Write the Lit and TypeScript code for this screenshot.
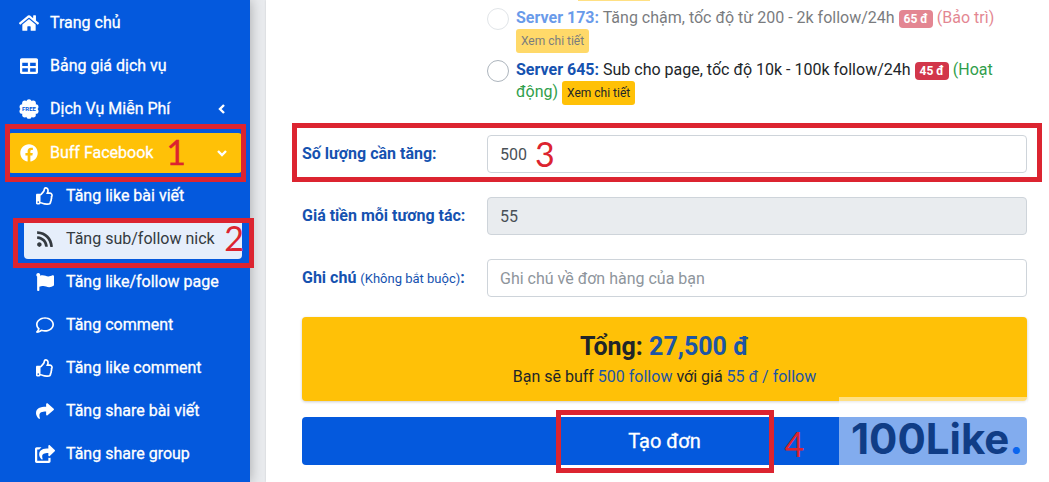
import { LitElement, html, css, svg, nothing } from "lit";
import { customElement, property } from "lit/decorators.js";

type Glyph = { box: string; width: number; d: string };

const GLYPHS: Record<string, Glyph> = {
  home: {
    box: "0 0 576 512",
    width: 20,
    d: "M280.37 148.26L96 300.11V464a16 16 0 0 0 16 16l112.06-.29a16 16 0 0 0 15.92-16V368a16 16 0 0 1 16-16h64a16 16 0 0 1 16 16v95.64a16 16 0 0 0 16 16.05L464 480a16 16 0 0 0 16-16V300L295.67 148.26a12.19 12.19 0 0 0-15.3 0zM571.6 251.47L488 182.56V44.05a12 12 0 0 0-12-12h-56a12 12 0 0 0-12 12v72.61L318.47 43a48 48 0 0 0-61 0L4.34 251.47a12 12 0 0 0-1.6 16.9l25.5 31A12 12 0 0 0 45.15 301l235.22-193.74a12.19 12.19 0 0 1 15.3 0L530.9 301a12 12 0 0 0 16.9-1.6l25.5-31a12 12 0 0 0-1.7-16.93z",
  },
  table: {
    box: "0 0 512 512",
    width: 18,
    d: "M464 32H48C21.49 32 0 53.49 0 80v352c0 26.51 21.49 48 48 48h416c26.51 0 48-21.49 48-48V80c0-26.51-21.49-48-48-48zM224 416H64v-96h160v96zm0-160H64v-96h160v96zm224 160H288v-96h160v96zm0-160H288v-96h160v96z",
  },
  facebook: {
    box: "0 0 512 512",
    width: 18,
    d: "M504 256C504 119 393 8 256 8S8 119 8 256c0 123.78 90.69 226.38 209.25 245V327.69h-63V256h63v-54.64c0-62.15 37-96.48 93.67-96.48 27.14 0 55.52 4.84 55.52 4.84v61h-31.28c-30.8 0-40.41 19.12-40.41 38.73V256h68.78l-11 71.69h-57.78V501C413.31 482.38 504 379.78 504 256z",
  },
  like: {
    box: "0 0 512 512",
    width: 18,
    d: "M466.27 286.69C475.04 271.84 480 256 480 236.85c0-44.015-37.218-85.58-85.82-85.58H357.7c4.92-12.81 8.85-28.13 8.85-46.54C366.55 31.936 328.86 0 271.28 0c-61.607 0-58.093 94.933-71.76 108.6-22.747 22.747-49.615 66.447-68.76 83.4H32c-17.673 0-32 14.327-32 32v240c0 17.673 14.327 32 32 32h64c14.893 0 27.408-10.174 30.978-23.95 44.509 1.001 75.06 39.94 177.802 39.94 7.22 0 15.22.01 22.22.01 77.117 0 111.986-39.423 112.94-95.33 13.319-18.425 20.299-43.122 17.34-66.99 9.854-18.452 13.664-40.343 8.99-62.99zm-61.75 53.83c12.56 21.13 1.26 49.41-13.94 57.57 7.7 48.78-17.608 65.9-53.12 65.9h-37.82c-71.639 0-118.029-37.82-171.64-37.82V240h10.92c28.36 0 67.98-70.89 94.54-97.46 28.36-28.36 18.91-75.63 37.82-94.54 47.27 0 47.27 32.98 47.27 56.73 0 39.17-28.36 56.72-28.36 94.54h103.99c21.11 0 37.73 18.91 37.82 37.82.09 18.9-12.82 37.81-22.27 37.81 13.489 14.555 16.371 45.236-5.21 65.62zM88 432c0 13.255-10.745 24-24 24s-24-10.745-24-24 10.745-24 24-24 24 10.745 24 24z",
  },
  rss: {
    box: "0 0 448 512",
    width: 16,
    d: "M128.081 415.959c0 35.369-28.672 64.041-64.041 64.041S0 451.328 0 415.959s28.672-64.041 64.041-64.041 64.04 28.673 64.04 64.041zm175.66 47.25c-8.354-154.6-132.185-278.587-286.95-286.95C7.656 175.765 0 183.105 0 192.253v48.069c0 8.415 6.49 15.472 14.887 16.018 111.832 7.284 201.473 96.702 208.772 208.772.547 8.397 7.604 14.887 16.018 14.887h48.069c9.149.001 16.489-7.655 15.995-16.79zm144.249.288C439.596 229.677 251.465 40.445 16.503 32.01 7.473 31.686 0 38.981 0 48.016v48.068c0 8.625 6.835 15.645 15.453 15.999 191.179 7.839 344.627 161.316 352.465 352.465.353 8.618 7.373 15.453 15.999 15.453h48.068c9.034-.001 16.329-7.474 16.005-16.504z",
  },
  flag: {
    box: "0 0 512 512",
    width: 18,
    d: "M349.565 98.783C295.978 98.783 251.721 64 184.348 64c-24.955 0-47.309 4.384-68.045 12.013a55.947 55.947 0 0 0 3.586-23.562C118.117 24.015 94.806 1.206 66.338.048 34.345-1.254 8 24.296 8 56c0 19.026 9.497 35.825 24 45.945V488c0 13.255 10.745 24 24 24h16c13.255 0 24-10.745 24-24v-94.4c28.311-12.064 63.582-22.122 114.435-22.122 53.588 0 97.844 34.783 165.217 34.783 48.169 0 86.667-16.294 122.505-40.858C506.84 359.452 512 349.571 512 339.045v-243.1c0-23.393-24.269-38.87-45.485-29.016-34.338 15.948-76.454 31.854-116.95 31.854z",
  },
  comment: {
    box: "0 0 512 512",
    width: 18,
    d: "M256 32C114.6 32 0 125.1 0 240c0 47.6 19.9 91.2 52.9 126.3C38 405.7 7 439.1 6.5 439.5c-6.6 7-8.4 17.2-4.6 26S14.4 480 24 480c61.5 0 110-25.7 139.1-46.3C192 442.8 223.2 448 256 448c141.4 0 256-93.1 256-208S397.4 32 256 32zm0 368c-26.7 0-53.1-4.1-78.4-12.1l-22.7-7.2-19.5 13.8c-14.3 10.1-33.9 21.4-57.5 29 7.3-12.1 14.4-25.7 19.9-40.2l10.6-28.1-20.6-21.8C69.7 314.1 48 282.2 48 240c0-88.2 93.3-160 208-160s208 71.8 208 160-93.3 160-208 160z",
  },
  share: {
    box: "0 0 512 512",
    width: 18,
    d: "M503.691 189.836L327.687 37.851C312.281 24.546 288 35.347 288 56.015v80.053C127.371 137.907 0 170.1 0 322.326c0 61.441 39.581 122.309 83.333 154.132 13.653 9.931 33.111-2.533 28.077-18.631C66.066 312.814 132.917 274.316 288 272.085V360c0 20.7 24.3 31.453 39.687 18.164l176.004-152c11.071-9.562 11.086-26.753 0-36.328z",
  },
  shareSquare: {
    box: "0 0 576 512",
    width: 20,
    d: "M568.482 177.448L424.479 313.433C409.3 327.768 384 317.14 384 295.985v-71.963c-144.575.97-205.566 35.113-164.775 171.353 4.483 14.973-12.846 26.567-25.006 17.33C155.252 383.105 120 326.488 120 269.339c0-143.937 117.599-172.5 264-173.312V24.012c0-21.174 25.317-31.768 40.479-17.448l144.003 135.988c10.02 9.463 10.028 25.425 0 34.896zM384 379.128V448H64V128h50.916a11.99 11.99 0 0 0 8.648-3.693c14.953-15.568 32.237-27.89 51.014-37.676C185.708 80.83 181.584 64 169.033 64H48C21.49 64 0 85.49 0 112v352c0 26.51 21.49 48 48 48h352c26.51 0 48-21.49 48-48v-88.806c0-8.288-8.197-14.066-16.011-11.302a71.83 71.83 0 0 1-34.189 3.377c-7.27-1.046-13.8 4.514-13.8 11.859z",
  },
};

@customElement("nav-icon")
class NavIcon extends LitElement {
  @property() name = "";

  static styles = css`
    :host {
      display: flex;
      justify-content: center;
      align-items: center;
      flex: none;
      width: 26px;
    }
    svg {
      display: block;
      fill: currentColor;
    }
    .free {
      font: 700 6px "Roboto", sans-serif;
      fill: #0459dd;
      -webkit-text-stroke: 0;
    }
  `;

  render() {
    if (this.name === "free") {
      const bumps = Array.from({ length: 10 }, (_, i) => {
        const a = (i * Math.PI) / 5;
        return svg`<circle cx=${10 + 7.2 * Math.sin(a)} cy=${10 - 7.2 * Math.cos(a)} r="2.6"></circle>`;
      });
      return html`<svg width="20" height="20" viewBox="0 0 20 20" aria-hidden="true">
        <circle cx="10" cy="10" r="8"></circle>
        ${bumps}
        <text class="free" x="10" y="12" text-anchor="middle">FREE</text>
      </svg>`;
    }
    const g = GLYPHS[this.name];
    if (!g) return nothing;
    return html`<svg width=${g.width} height="18" viewBox=${g.box} aria-hidden="true">
      <path d=${g.d}></path>
    </svg>`;
  }
}

type NavItem = { icon: string; label: string; current?: boolean };

const TOP: NavItem[] = [
  { icon: "home", label: "Trang chủ" },
  { icon: "table", label: "Bảng giá dịch vụ" },
];

const SUB: NavItem[] = [
  { icon: "like", label: "Tăng like bài viết" },
  { icon: "rss", label: "Tăng sub/follow nick", current: true },
  { icon: "flag", label: "Tăng like/follow page" },
  { icon: "comment", label: "Tăng comment" },
  { icon: "like", label: "Tăng like comment" },
  { icon: "share", label: "Tăng share bài viết" },
  { icon: "shareSquare", label: "Tăng share group" },
];

@customElement("side-nav")
class SideNav extends LitElement {
  static styles = css`
    :host {
      display: block;
      box-sizing: border-box;
      padding: 3px 8px 0;
      background: #0459dd;
      color: #fff;
      box-shadow: 0 0 12px rgba(0, 0, 0, 0.3);
      position: relative;
      z-index: 1;
    }
    ul {
      list-style: none;
      margin: 0;
      padding: 0;
      display: flex;
      flex-direction: column;
      gap: 3px;
    }
    .sub {
      padding: 3px 0 0 16px;
    }
    .open {
      padding-top: 1px;
    }
    li {
      position: relative;
    }
    .link {
      position: relative;
      box-sizing: border-box;
      display: flex;
      align-items: center;
      gap: 8px;
      width: 100%;
      height: 40px;
      padding: 0 15px 0 8px;
      border: 0;
      border-radius: 4px;
      background: none;
      color: inherit;
      font: 400 16px/24px "Roboto", sans-serif;
      text-align: left;
      text-decoration: none;
      white-space: nowrap;
      -webkit-text-stroke: 0.3px currentColor;
    }
    .label {
      flex: 1;
    }
    .active {
      background: #ffc107;
    }
    .current {
      background: #e6eefb;
      color: #343a40;
      -webkit-text-stroke: 0;
    }
    .chevron {
      fill: none;
      stroke: currentColor;
      stroke-width: 2.4;
    }
    .frame {
      position: absolute;
      box-sizing: border-box;
      border: 5px solid #dc2430;
      pointer-events: none;
      z-index: 1;
    }
    .frame-one {
      inset: -9px -4px -9px -3px;
    }
    .frame-two {
      inset: -1px -12px -9px -11px;
    }
    .step {
      position: absolute;
      top: 50%;
      margin-top: -21px;
      color: #dc2430;
      font: 400 34px/40px "Lato", sans-serif;
      z-index: 2;
      pointer-events: none;
    }
    .step-one {
      right: 56px;
    }
    .step-two {
      right: -2px;
    }
  `;

  link(item: NavItem) {
    return html`<li>
      <a
        class="link ${item.current ? "current" : ""}"
        href="#"
        aria-current=${item.current ? "page" : nothing}
      >
        <nav-icon name=${item.icon}></nav-icon>
        <span class="label">${item.label}</span>
      </a>
      ${item.current
        ? html`<span class="frame frame-two"></span><span class="step step-two">2</span>`
        : nothing}
    </li>`;
  }

  render() {
    return html`<nav>
      <ul>
        ${TOP.map((i) => this.link(i))}
        <li>
          <button class="link" type="button" aria-expanded="false">
            <nav-icon name="free"></nav-icon>
            <span class="label">Dịch Vụ Miễn Phí</span>
            <svg class="chevron" width="10" height="10" viewBox="0 0 10 10" aria-hidden="true">
              <path d="M7 1L3 5l4 4"></path>
            </svg>
          </button>
        </li>
        <li class="open">
          <button class="link active" type="button" aria-expanded="true">
            <nav-icon name="facebook"></nav-icon>
            <span class="label">Buff Facebook</span>
            <svg class="chevron" width="10" height="10" viewBox="0 0 10 10" aria-hidden="true">
              <path d="M1 3l4 4 4-4"></path>
            </svg>
            <span class="frame frame-one"></span>
            <span class="step step-one">1</span>
          </button>
          <ul class="sub">
            ${SUB.map((i) => this.link(i))}
          </ul>
        </li>
      </ul>
    </nav>`;
  }
}

type Server = {
  id: number;
  text: string;
  price: string;
  status: string;
  down?: boolean;
};

const SERVERS: Server[] = [
  { id: 173, text: "Tăng chậm, tốc độ từ 200 - 2k follow/24h", price: "65 đ", status: "(Bảo trì)", down: true },
  { id: 645, text: "Sub cho page, tốc độ 10k - 100k follow/24h", price: "45 đ", status: "(Hoạt động)" },
];

@customElement("order-form")
class OrderForm extends LitElement {
  static styles = css`
    :host {
      display: block;
      box-sizing: border-box;
      padding: 0 22px 17px 36px;
      background: #fff;
      color: #212529;
      font: 400 16px/24px "Roboto", sans-serif;
    }
    form {
      display: flex;
      flex-direction: column;
      gap: 24px;
    }
    .row {
      position: relative;
      display: grid;
      grid-template-columns: 185px 1fr;
      align-items: center;
    }
    .servers {
      grid-column: 2;
      display: flex;
      flex-direction: column;
      gap: 6px;
      margin-bottom: 6px;
    }
    .cut {
      width: 72px;
      height: 1px;
      margin-left: 91px;
      background: #ffe083;
    }
    .server {
      display: grid;
      grid-template-columns: 21px 1fr;
      column-gap: 8px;
      align-items: start;
      line-height: 22px;
    }
    .down {
      opacity: 0.6;
    }
    .radio {
      appearance: none;
      box-sizing: border-box;
      width: 22px;
      height: 22px;
      margin: 1px 0 0;
      border: 1px solid #adb5bd;
      border-radius: 50%;
      background: #fff;
    }
    .radio:disabled {
      border-color: #ced4da;
    }
    .name,
    .label {
      color: #1552b0;
      font-weight: 700;
    }
    .down .name {
      color: #0459dd;
    }
    .badge {
      display: inline-block;
      padding: 0 5px;
      border-radius: 4px;
      background: #d2364a;
      color: #fff;
      font: 700 12px/18px "Roboto", sans-serif;
    }
    .ok {
      color: #2f9e4b;
    }
    .bad {
      color: #d2364a;
    }
    .more {
      height: 24px;
      padding: 0 5px;
      border: 0;
      border-radius: 3px;
      background: #ffc107;
      color: #212529;
      font: 400 12px/24px "Roboto", sans-serif;
      vertical-align: middle;
    }
    .hint {
      font-size: 13px;
      font-weight: 400;
    }
    .input {
      box-sizing: border-box;
      width: 100%;
      height: 38px;
      padding: 6px 12px;
      border: 1px solid #ced4da;
      border-radius: 4px;
      background: #fff;
      color: #495057;
      font: 400 16px/24px "Roboto", sans-serif;
    }
    .input:read-only {
      background: #e9ecef;
    }
    .input::placeholder {
      color: #8e959c;
      opacity: 1;
    }
    .total {
      padding: 12px;
      margin-top: -4px;
      border-radius: 4px;
      background: #ffc107;
      box-shadow: 0 1px 3px rgba(0, 0, 0, 0.2);
      text-align: center;
    }
    .sum {
      margin: 0;
      font-size: 25px;
      line-height: 36px;
      font-weight: 700;
    }
    .detail {
      margin: 0;
    }
    .blue {
      color: #1d55a5;
    }
    .action {
      position: relative;
      margin-top: -8px;
    }
    .submit {
      width: 100%;
      height: 48px;
      border: 0;
      border-radius: 4px;
      background: #0459dd;
      color: #fff;
      font: 400 20px/30px "Roboto", sans-serif;
      -webkit-text-stroke: 0.3px currentColor;
    }
    .frame {
      position: absolute;
      box-sizing: border-box;
      border: 5px solid #dc2430;
      pointer-events: none;
    }
    .frame-row {
      inset: -12px -15px -9px -10px;
    }
    .frame-submit {
      inset: -7px 0 -8px;
      width: 218px;
      margin: 0 auto;
    }
    .step {
      position: absolute;
      top: 50%;
      margin-top: -20px;
      color: #dc2430;
      font: 400 34px/40px "Lato", sans-serif;
      pointer-events: none;
    }
    .step-row {
      left: 233px;
    }
    .step-submit {
      left: 50%;
      margin: -17px 0 0 120px;
    }
    .mark {
      position: absolute;
      inset: -20px 0 -17px auto;
      box-sizing: border-box;
      width: 188px;
      padding-left: 12px;
      background: rgba(255, 255, 255, 0.5);
      color: #103d86;
      font: 700 42px/84px "Inter", sans-serif;
      white-space: nowrap;
      pointer-events: none;
    }
    .dot {
      color: #0a66ee;
    }
  `;

  server(s: Server) {
    return html`<div class="server ${s.down ? "down" : ""}">
      <input class="radio" type="radio" name="server" id="server-${s.id}" ?disabled=${s.down} />
      <div>
        <label for="server-${s.id}"
          ><span class="name">Server ${s.id}:</span> ${s.text}
          <span class="badge">${s.price}</span>
          ${s.status
            .split(" ")
            .map((word) => html`<span class=${s.down ? "bad" : "ok"}>${word}</span> `)}</label
        ><button class="more" type="button">Xem chi tiết</button>
      </div>
    </div>`;
  }

  render() {
    return html`<form>
      <div class="row">
        <div class="servers">
          <div class="cut"></div>
          ${SERVERS.map((s) => this.server(s))}
        </div>
      </div>
      <div class="row">
        <label class="label" for="amount">Số lượng cần tăng:</label>
        <input class="input" id="amount" type="text" inputmode="numeric" value="500" />
        <span class="frame frame-row"></span>
        <span class="step step-row">3</span>
      </div>
      <div class="row">
        <label class="label" for="price">Giá tiền mỗi tương tác:</label>
        <input class="input" id="price" type="text" value="55" readonly />
      </div>
      <div class="row">
        <label class="label" for="note">Ghi chú <span class="hint">(Không bắt buộc)</span>:</label>
        <input class="input" id="note" type="text" placeholder="Ghi chú về đơn hàng của bạn" />
      </div>
      <div class="total">
        <h2 class="sum">Tổng: <span class="blue">27,500 đ</span></h2>
        <p class="detail">
          Bạn sẽ buff <span class="blue">500 follow</span> với giá
          <span class="blue">55 đ / follow</span>
        </p>
      </div>
      <div class="action">
        <button class="submit" type="button">Tạo đơn</button>
        <span class="frame frame-submit"></span>
        <span class="step step-submit">4</span>
        <div class="mark">100Like<span class="dot">.</span></div>
      </div>
    </form>`;
  }
}

@customElement("app-root")
class AppRoot extends LitElement {
  static styles = css`
    :host {
      display: grid;
      grid-template-columns: 250px 1fr;
      min-height: 100vh;
      overflow: hidden;
      background: #e9ebee;
    }
    .content {
      padding-left: 16px;
    }
    order-form {
      min-height: 100%;
      box-shadow: 0 0 2px rgba(0, 0, 0, 0.12);
    }
  `;

  render() {
    return html`<side-nav></side-nav>
      <main class="content"><order-form></order-form></main>`;
  }
}
